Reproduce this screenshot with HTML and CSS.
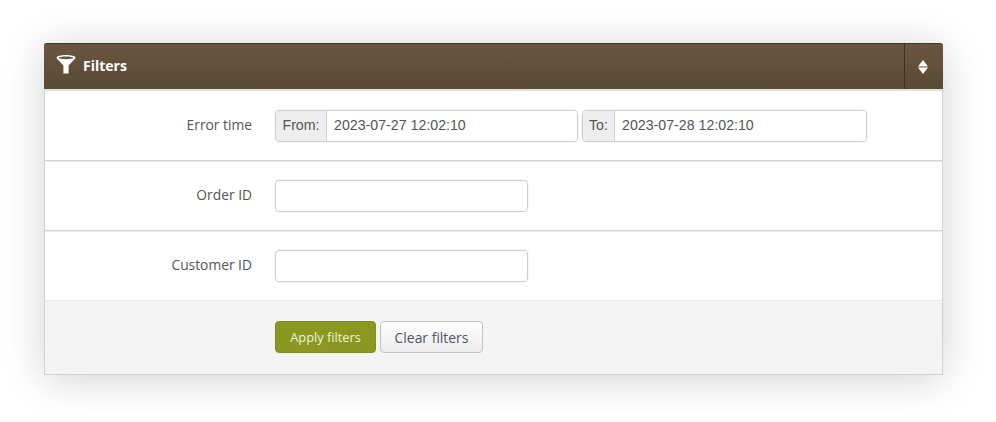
FILE: index.html
```html
<!DOCTYPE html>
<html lang="en">
<head>
<meta charset="utf-8">
<title>Filters</title>
<link rel="stylesheet" href="styles.css">
</head>
<body>
<main class="page">
  <section class="panel">
    <header class="panel-head">
      <div class="panel-title">
        <svg class="funnel" width="20" height="19" viewBox="0 0 20 19" aria-hidden="true">
          <path fill="#fff" fill-rule="evenodd" d="M10 0C15 0 19.500 1 19.500 2.800c0 .5-.3.9-.8 1.300L12.600 10.500V18.500H7.400V10.500L1.300 4.100C.8 3.700.5 3.300.5 2.800.5 1 5 0 10 0zM10 1.400C6.200 1.400 3.200 2 2.300 2.800c.9.800 3.900 1.400 7.700 1.400s6.800-.6 7.700-1.400C16.800 2 13.800 1.400 10 1.400z"/>
        </svg>
        <h2>Filters</h2>
      </div>
      <button class="toggle" type="button" aria-label="Toggle">
        <svg width="10" height="14" viewBox="0 0 10 14" aria-hidden="true">
          <path fill="#fff" d="M5 0l5 6.400H0zM0 7.600h10L5 14z"/>
        </svg>
      </button>
    </header>
    <div class="row">
      <label class="row-label">Error time</label>
      <div class="row-fields">
        <div class="range range-from">
          <span class="addon addon-from">From:</span>
          <input class="range-input" type="text" value="2023-07-27 12:02:10">
        </div>
        <div class="range range-to">
          <span class="addon addon-to">To:</span>
          <input class="range-input" type="text" value="2023-07-28 12:02:10">
        </div>
      </div>
    </div>
    <div class="row">
      <label class="row-label">Order ID</label>
      <div class="row-fields"><input class="text-input" type="text"></div>
    </div>
    <div class="row row-last">
      <label class="row-label">Customer ID</label>
      <div class="row-fields"><input class="text-input" type="text"></div>
    </div>
    <footer class="actions">
      <button class="btn btn-primary" type="button">Apply filters</button>
      <button class="btn btn-default" type="button">Clear filters</button>
    </footer>
  </section>
</main>
</body>
</html>
```
FILE: styles.css
```css
* { box-sizing: border-box; }
html, body { margin: 0; height: 100%; background: #fff; overflow: hidden; }
body { font-family: "Open Sans", sans-serif; font-size: 14px; color: #555; }
.page { padding: 43px 53px 0 44px; }
.panel {
  width: 899px;
  height: 332px;
  background: #fff;
  border: 1px solid #d8d0ca;
  border-top: 0;
  border-radius: 3px 3px 0 0;
  box-shadow: 0 4px 42px rgba(0,0,0,.18);
  display: flex;
  flex-direction: column;
}
.panel-head {
  height: 48px;
  margin: 0 -1px;
  flex: none;
  display: flex;
  align-items: stretch;
  justify-content: space-between;
  background: linear-gradient(#6a5640, #5a4933);
  border-top: 1px solid #423627;
  border-bottom: 2px solid #e4e0dc;
  border-radius: 3px 3px 0 0;
}
.panel-title { display: flex; align-items: center; gap: 7px; padding: 0 0 2px 12px; }
.panel-title h2 { margin: 0; font-size: 14px; font-weight: 700; color: #fff; }
.funnel { display: block; margin-top: -2px; }
.toggle {
  width: 39px;
  padding: 0 2px 0 0;
  background: none;
  border: 0;
  border-left: 1px solid #38302a;
  display: flex;
  align-items: center;
  justify-content: center;
}
.row {
  height: 70px;
  flex: none;
  display: flex;
  align-items: center;
  border-bottom: 1px solid #d4d4d4;
  box-shadow: 0 1px 0 #ececec;
}
.row-last { border-bottom-color: #e8e8e8; box-shadow: none; }
.row-label { width: 207px; padding-bottom: 2px; text-align: right; flex: none; font-size: 13.800px; color: #555; }
.row-fields { margin-left: 23px; display: flex; gap: 4px; }
.range {
  display: flex;
  height: 32px;
  border: 1px solid #cfcfcf;
  border-radius: 4px;
  overflow: hidden;
  box-shadow: 0 0 0 1px rgba(0,0,0,.03);
}
.range-from { width: 303px; }
.range-to { width: 285px; }
.addon {
  flex: none;
  display: flex;
  align-items: center;
  justify-content: center;
  padding-bottom: 2px;
  background: #eee;
  border-right: 1px solid #cfcfcf;
  font-family: "Liberation Sans", Arial, sans-serif;
  font-size: 14.200px;
  color: #555;
}
.addon-from { width: 51px; }
.addon-to { width: 32px; }
.range-input, .text-input {
  font-family: "Liberation Sans", Arial, sans-serif;
  font-size: 14.200px;
  color: #555;
  background: #fff;
  outline: 0;
}
.range-input { flex: 1; min-width: 0; border: 0; padding: 0 7px 2px; }
.text-input {
  width: 253px;
  height: 32px;
  border: 1px solid #cfcfcf;
  border-radius: 4px;
  box-shadow: 0 0 0 1px rgba(0,0,0,.03);
}
.actions {
  flex: 1;
  background: #f4f4f4;
  display: flex;
  gap: 4px;
  padding: 20px 0 0 230px;
  align-items: flex-start;
}
.btn {
  height: 32px;
  padding: 0;
  font-family: "Open Sans", sans-serif;
  border-radius: 4px;
}
.btn-primary {
  width: 101px;
  font-size: 12.800px;
  background: #8a9720;
  border: 1px solid #808d1c;
  color: #f2f4da;
}
.btn-default {
  width: 103px;
  font-size: 13.900px;
  background: linear-gradient(#fff, #ebebeb);
  border: 1px solid #c4c4c4;
  color: #50525e;
}
```
